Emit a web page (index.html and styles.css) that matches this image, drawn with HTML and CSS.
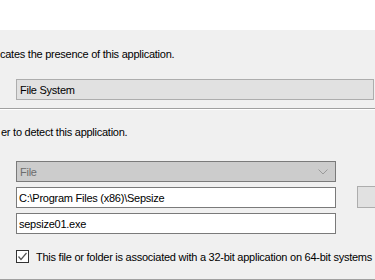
FILE: index.html
```html
<!DOCTYPE html>
<html lang="en">
<head>
    <meta charset="UTF-8">
    <meta name="viewport" content="width=device-width, initial-scale=1.0">
    <title>Detection Method</title>
    <link rel="stylesheet" href="styles.css">
</head>
<body>
    <div class="header"></div>
    <div class="panel">
        <p class="intro">cates the presence of this application.</p>
        <div class="combo combo-system">File System</div>
        <div class="separator"></div>

        <p class="intro intro-second">er to detect this application.</p>
        <div class="combo combo-disabled">
            <span>File</span>
            <svg class="chevron" width="10" height="6" viewBox="0 0 10 6">
                <path d="M0.5 0.5 L5 5 L9.5 0.5" fill="none" stroke="#9a9a9a" stroke-width="1"/>
            </svg>
        </div>

        <div class="field-row">
            <div class="textbox">C:\Program Files (x86)\Sepsize</div>
            <div class="browse"></div>
        </div>
        <div class="textbox">sepsize01.exe</div>

        <label class="check-row">
            <span class="checkbox">
                <svg width="11" height="11" viewBox="0 0 11 11">
                    <path d="M1.5 5.5 L4 8.5 L9.5 2" fill="none" stroke="#555" stroke-width="1.2"/>
                </svg>
            </span>
            This file or folder is associated with a 32-bit application on 64-bit systems
        </label>
        <div class="bottom-line"></div>
    </div>
</body>
</html>
```

FILE: styles.css
```css
body {
    margin: 0;
    width: 375px;
    height: 280px;
    overflow: hidden;
    font-family: "Liberation Sans", Arial, sans-serif;
    font-size: 11px;
    letter-spacing: -0.25px;
    color: #000;
    background-color: #f0f0f0;
}

.header {
    height: 30px;
    background-color: #ffffff;
}

.panel {
    background-color: #f0f0f0;
    padding-top: 18px;
}

.intro {
    margin: 0;
    line-height: 13px;
    white-space: nowrap;
}

.intro-second {
    margin-top: 16px;
    padding-left: 1px;
}

.combo {
    box-sizing: border-box;
    height: 21px;
    margin-left: 16px;
    padding: 0 3px;
    display: flex;
    align-items: center;
    justify-content: space-between;
    white-space: nowrap;
}

.combo-system {
    margin-top: 18px;
    width: 358px;
    background-color: #e1e1e1;
    border: 1px solid #adadad;
}

.combo-disabled {
    margin-top: 22px;
    width: 320px;
    background-color: #cccccc;
    border: 1px solid #7a7a7a;
    color: #6d6d6d;
}

.chevron {
    margin-right: 4px;
}

.separator {
    margin-top: 8px;
    height: 1px;
    background-color: #a0a0a0;
    border-bottom: 1px solid #ffffff;
}

.field-row {
    display: flex;
    align-items: flex-start;
    margin-top: 5px;
}

.textbox {
    box-sizing: border-box;
    flex: none;
    width: 320px;
    height: 21px;
    margin-left: 16px;
    padding: 0 2px;
    background-color: #ffffff;
    border: 1px solid #7a7a7a;
    display: flex;
    align-items: center;
    white-space: nowrap;
}

.field-row + .textbox {
    margin-top: 5px;
}

/* button is cut off by the right edge of the window */
.browse {
    box-sizing: border-box;
    flex: none;
    width: 18px;
    height: 22px;
    margin-left: 21px;
    margin-top: -1px;
    background-color: #e1e1e1;
    border: 1px solid #adadad;
    border-right: none;
}

.check-row {
    display: flex;
    align-items: center;
    gap: 7px;
    margin-top: 16px;
    margin-left: 16px;
    height: 13px;
    white-space: nowrap;
}

.checkbox {
    box-sizing: border-box;
    flex: none;
    width: 13px;
    height: 13px;
    border: 1px solid #333333;
    background-color: #ffffff;
    display: flex;
    align-items: center;
    justify-content: center;
}

.bottom-line {
    margin-top: 16px;
    height: 1px;
    background-color: #a0a0a0;
}
```
